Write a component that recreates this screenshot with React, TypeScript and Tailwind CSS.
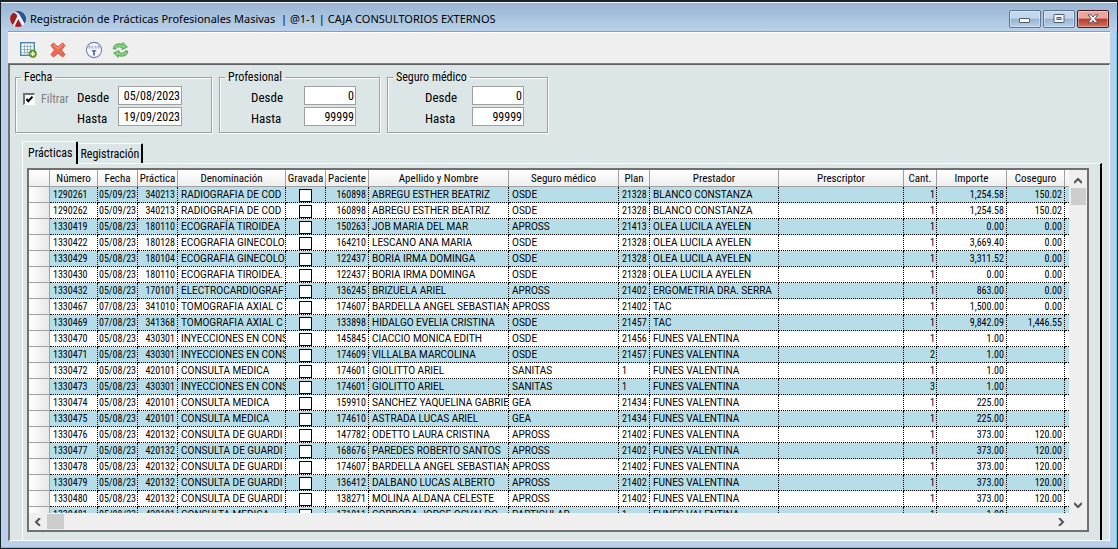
import type { ReactNode } from "react";

type Row = {
  numero: string;
  fecha: string;
  practica: string;
  denominacion: string;
  paciente: string;
  nombre: string;
  seguro: string;
  plan: string;
  prestador: string;
  cant: string;
  importe: string;
  coseguro: string;
};

const columns = [
  { label: "", width: "w-[21px]" },
  { label: "Número", width: "w-[48px]" },
  { label: "Fecha", width: "w-[40px]" },
  { label: "Práctica", width: "w-[40px]" },
  { label: "Denominación", width: "w-[108px]" },
  { label: "Gravada", width: "w-[40px]" },
  { label: "Paciente", width: "w-[43px]" },
  { label: "Apellido y Nombre", width: "w-[140px]" },
  { label: "Seguro médico", width: "w-[110px]" },
  { label: "Plan", width: "w-[31px]" },
  { label: "Prestador", width: "w-[129px]" },
  { label: "Prescriptor", width: "w-[125px]" },
  { label: "Cant.", width: "w-[33px]" },
  { label: "Importe", width: "w-[70px]" },
  { label: "Coseguro", width: "w-[58px]" }
];

const data = `1290261|05/09/23|340213|RADIOGRAFIA DE COD|160898|ABREGU ESTHER BEATRIZ|OSDE|21328|BLANCO CONSTANZA|1|1,254.58|150.02
1290262|05/09/23|340213|RADIOGRAFIA DE COD|160898|ABREGU ESTHER BEATRIZ|OSDE|21328|BLANCO CONSTANZA|1|1,254.58|150.02
1330419|05/08/23|180110|ECOGRAFÍA TIROIDEA|150263|JOB MARIA DEL MAR|APROSS|21413|OLEA LUCILA AYELEN|1|0.00|0.00
1330422|05/08/23|180128|ECOGRAFIA GINECOLO|164210|LESCANO ANA MARIA|OSDE|21328|OLEA LUCILA AYELEN|1|3,669.40|0.00
1330429|05/08/23|180104|ECOGRAFIA GINECOLO|122437|BORIA IRMA DOMINGA|OSDE|21328|OLEA LUCILA AYELEN|1|3,311.52|0.00
1330430|05/08/23|180110|ECOGRAFIA TIROIDEA.|122437|BORIA IRMA DOMINGA|OSDE|21328|OLEA LUCILA AYELEN|1|0.00|0.00
1330432|05/08/23|170101|ELECTROCARDIOGRAF|136245|BRIZUELA ARIEL|APROSS|21402|ERGOMETRIA DRA. SERRA|1|863.00|0.00
1330467|07/08/23|341010|TOMOGRAFIA AXIAL C|174607|BARDELLA ANGEL SEBASTIAN|APROSS|21402|TAC|1|1,500.00|0.00
1330469|07/08/23|341368|TOMOGRAFIA AXIAL C|133898|HIDALGO EVELIA CRISTINA|OSDE|21457|TAC|1|9,842.09|1,446.55
1330470|05/08/23|430301|INYECCIONES EN CONS|145845|CIACCIO MONICA EDITH|OSDE|21456|FUNES VALENTINA|1|1.00|
1330471|05/08/23|430301|INYECCIONES EN CONS|174609|VILLALBA MARCOLINA|OSDE|21457|FUNES VALENTINA|2|1.00|
1330472|05/08/23|420101|CONSULTA MEDICA|174601|GIOLITTO ARIEL|SANITAS|1|FUNES VALENTINA|1|1.00|
1330473|05/08/23|430301|INYECCIONES EN CONS|174601|GIOLITTO ARIEL|SANITAS|1|FUNES VALENTINA|3|1.00|
1330474|05/08/23|420101|CONSULTA MEDICA|159910|SANCHEZ YAQUELINA GABRIE|GEA|21434|FUNES VALENTINA|1|225.00|
1330475|05/08/23|420101|CONSULTA MEDICA|174610|ASTRADA LUCAS ARIEL|GEA|21434|FUNES VALENTINA|1|225.00|
1330476|05/08/23|420132|CONSULTA DE GUARDI|147782|ODETTO LAURA CRISTINA|APROSS|21402|FUNES VALENTINA|1|373.00|120.00
1330477|05/08/23|420132|CONSULTA DE GUARDI|168676|PAREDES ROBERTO SANTOS|APROSS|21402|FUNES VALENTINA|1|373.00|120.00
1330478|05/08/23|420132|CONSULTA DE GUARDI|174607|BARDELLA ANGEL SEBASTIAN|APROSS|21402|FUNES VALENTINA|1|373.00|120.00
1330479|05/08/23|420132|CONSULTA DE GUARDI|136412|DALBANO LUCAS ALBERTO|APROSS|21402|FUNES VALENTINA|1|373.00|120.00
1330480|05/08/23|420132|CONSULTA DE GUARDI|138271|MOLINA ALDANA CELESTE|APROSS|21402|FUNES VALENTINA|1|373.00|120.00
1330481|05/08/23|420101|CONSULTA MEDICA|171011|CORDOBA JORGE OSVALDO|PARTICULAR|1|FUNES VALENTINA|1|1.00|`;

const rows: Row[] = data.split("\n").map((line) => {
  const [numero, fecha, practica, denominacion, paciente, nombre, seguro, plan, prestador, cant, importe, coseguro] =
    line.split("|");
  return { numero, fecha, practica, denominacion, paciente, nombre, seguro, plan, prestador, cant, importe, coseguro };
});

function Logo() {
  return (
    <svg viewBox="0 0 16 16" className="size-4 shrink-0">
      <circle cx="8" cy="8" r="8" fill="#f4f4f8" />
      <path d="M4.6.8A8 8 0 0 1 14.6 12.6L9.4 3.4Q7.6.9 4.6.8Z" fill="#2b5597" />
      <path d="M3 1.8Q6.4 2 7.4 5L3 14.2A8 8 0 0 1 3 1.8Z" fill="#a01d22" />
      <path d="M8.3 8 12 14.9A8 8 0 0 1 4.7 15.2Z" fill="#a01d22" />
    </svg>
  );
}

function GridAddIcon() {
  return (
    <svg viewBox="0 0 17 16" className="h-4 w-[17px]">
      <rect x=".75" y=".75" width="13.5" height="12.5" fill="#fff" stroke="#4a82a8" strokeWidth="1.4" />
      <path d="M2.5 4.5h10M2.5 7.5h10M2.5 10.5h10M4.5 2.5v9.5M7.5 2.5v9.5M10.5 2.5v9.5" stroke="#8fb4cd" />
      <circle cx="12.8" cy="11.8" r="3.7" fill="#6da31c" stroke="#4d7f12" strokeWidth=".7" />
      <path d="M12.8 9.6v4.4M10.6 11.8H15" stroke="#fff" strokeWidth="1.3" />
    </svg>
  );
}

function DeleteIcon() {
  return (
    <svg viewBox="0 0 16 16" className="size-4">
      <path
        d="M3.4 1 8 5 12.6 1 15 3.4 11.4 8l3.6 4.6-2.4 2.4L8 11l-4.6 4L1 12.6 4.6 8 1 3.4Z"
        fill="#ee6a58"
        stroke="#d8503f"
        strokeLinejoin="round"
      />
      <path d="M3.5 2.8 8 6.5l4.5-3.7" fill="none" stroke="#f8a79b" />
    </svg>
  );
}

function FilterIcon() {
  return (
    <svg viewBox="0 0 18 18" className="size-[18px]">
      <circle cx="9" cy="9" r="7.6" fill="#f4f6fb" stroke="#7386b4" strokeWidth="1.1" />
      <path d="M3.4 5.4h2M6.3 5.4h1.6M10 5.4h1.2M12.3 5.4h2.2M3.4 6.9h2.2M6.4 6.9h2M9.6 6.9h2M12.4 6.9h2.2" stroke="#8793b5" strokeWidth=".9" />
      <path d="M6.4 9.2h5.2L9.7 11v3.4H8.3V11Z" fill="#33508f" />
    </svg>
  );
}

function RefreshIcon() {
  return (
    <svg viewBox="0 0 17 16" className="h-4 w-[17px]" fill="#86d27e" stroke="#3f9444" strokeWidth=".8" strokeLinejoin="round">
      <path d="M1.2 7C1.4 3.4 4 1.8 7 1.8q2.2 0 3.8.8V.6L15.4 5l-5.4 2.4V5.6Q7.6 4.4 5.6 5 4.2 5.4 4 7Z" />
      <path d="M15.8 9c-.2 3.6-2.8 5.2-5.8 5.2q-2.2 0-3.8-.8v2L1.6 11 7 8.6v1.8q2.4 1.2 4.4.6 1.4-.4 1.6-2Z" />
    </svg>
  );
}

function Chevron({ d }: { d: string }) {
  return (
    <svg viewBox="0 0 8 8" className="size-2" fill="none" stroke="#555" strokeWidth="2">
      <path d={d} />
    </svg>
  );
}

function WindowButton({ label, close, children }: { label: string; close?: boolean; children: ReactNode }) {
  const look = close
    ? "border-[#4b1820] bg-linear-to-b from-[#e6a79f] from-45% via-[#b9392a] via-50% to-[#d2705c]"
    : "border-[#5f7690] bg-linear-to-b from-[#c3d6ec] from-45% via-[#98b3d1] via-50% to-[#b5cfe9]";
  return (
    <button
      type="button"
      aria-label={label}
      className={`flex h-[18px] w-8 items-center justify-center rounded-[2px] border shadow-[inset_0_0_0_1px_#ffffff60] ${look}`}
    >
      {children}
    </button>
  );
}

function Group({ title, width, children }: { title: string; width: string; children: ReactNode }) {
  return (
    <fieldset className={`h-[63px] ${width} border border-[#a0a0a0] px-1 shadow-[1px_1px_0_#fff,inset_1px_1px_0_#fff]`}>
      <legend className="ml-px px-[3px] text-[12px] leading-[14px]">{title}</legend>
      {children}
    </fieldset>
  );
}

function RangeField({ id, label, value, width, gap }: { id: string; label: string; value: string; width: string; gap: string }) {
  return (
    <div className={`flex items-center ${gap}`}>
      <label htmlFor={id} className="w-8 pt-[5px] text-[13px] leading-[14px]">
        {label}
      </label>
      <input
        id={id}
        defaultValue={value}
        className={`h-[19px] ${width} border border-[#a0a0a0] bg-white px-px text-right text-[12px] leading-4 outline-none`}
      />
    </div>
  );
}

function RangeGroup({ title, name, indent, gap }: { title: string; name: string; indent: string; gap: string }) {
  return (
    <Group title={title} width="w-[161px]">
      <div className={`flex flex-col gap-[2px] pt-[2px] ${indent}`}>
        <RangeField id={`${name}-desde`} label="Desde" value="0" width="w-[52px]" gap={gap} />
        <RangeField id={`${name}-hasta`} label="Hasta" value="99999" width="w-[52px]" gap={gap} />
      </div>
    </Group>
  );
}

function Cell({ children, right, tight, text }: { children?: ReactNode; right?: boolean; tight?: boolean; text?: boolean }) {
  return (
    <td
      className={`h-4 overflow-hidden border-r border-b border-dotted border-black whitespace-nowrap ${right ? "text-right" : ""} ${tight ? "px-px" : "pr-[2px] pl-[3px]"} ${text ? "font-['Roboto',sans-serif]" : ""}`}
    >
      {children}
    </td>
  );
}

function PracticesTable() {
  return (
    <table className="w-full table-fixed border-separate border-spacing-0 text-[10px] leading-[15px] text-black">
      <thead className="text-[11px]">
        <tr className="bg-linear-to-b from-white to-[#ededed]">
          {columns.map((col) => (
            <th
              key={col.label}
              className={`h-[17px] overflow-hidden border-r border-b border-[#a0a0a0] p-0 text-center font-normal whitespace-nowrap ${col.width}`}
            >
              {col.label}
            </th>
          ))}
          <th className="border-b border-[#a0a0a0] p-0" />
        </tr>
      </thead>
      <tbody>
        {rows.map((row) => (
          <tr key={row.numero} className="odd:bg-[#b7dde8] even:bg-white">
            <td className="h-4 border-r border-b border-[#a0a0a0] bg-linear-to-r from-white to-[#e8e8e8] p-0" />
            <Cell>{row.numero}</Cell>
            <Cell tight>{row.fecha}</Cell>
            <Cell right>{row.practica}</Cell>
            <Cell text>{row.denominacion}</Cell>
            <Cell tight>
              <input
                type="checkbox"
                aria-label={`Gravada ${row.numero}`}
                className="mx-auto mt-[2px] block size-[13px] appearance-none border border-black bg-white"
              />
            </Cell>
            <Cell right>{row.paciente}</Cell>
            <Cell text>{row.nombre}</Cell>
            <Cell text>{row.seguro}</Cell>
            <Cell>{row.plan}</Cell>
            <Cell text>{row.prestador}</Cell>
            <Cell />
            <Cell right tight>{row.cant}</Cell>
            <Cell right>{row.importe}</Cell>
            <Cell right>{row.coseguro}</Cell>
            <td className="border-b border-dotted border-black p-0" />
          </tr>
        ))}
      </tbody>
    </table>
  );
}

export default function App() {
  return (
    <div className="flex h-screen flex-col overflow-hidden border-x border-b border-t-2 border-[#182028] bg-[#b9d1ea] font-['Roboto_Condensed','Roboto',sans-serif] text-black shadow-[inset_-1px_-1px_0_#58cdee]">
      <header className="flex h-[29px] shrink-0 items-center justify-between bg-linear-to-b from-[#98b4d2] to-[#b9d1ea] pt-[5px] pr-2 pl-[9px] shadow-[inset_0_1px_0_#eef6ff]">
        <div className="flex items-center gap-1">
          <Logo />
          <h1 className="font-['Noto_Sans',sans-serif] text-[11px] leading-4 whitespace-pre">
            Registración de Prácticas Profesionales Masivas  | @1-1 | CAJA CONSULTORIOS EXTERNOS
          </h1>
        </div>
        <div className="flex gap-[2px]">
          <WindowButton label="Minimizar">
            <svg viewBox="0 0 12 8" className="h-2 w-3">
              <rect x=".5" y="3.5" width="10" height="4" rx=".5" fill="#fff" stroke="#4c5a6c" />
            </svg>
          </WindowButton>
          <WindowButton label="Maximizar">
            <svg viewBox="0 0 12 10" className="h-[10px] w-3">
              <rect x="1" y=".5" width="10" height="8" rx=".5" fill="#fff" stroke="#4c5a6c" />
              <rect x="4" y="3.5" width="4" height="2" fill="#a8c0dc" stroke="#4c5a6c" />
            </svg>
          </WindowButton>
          <WindowButton label="Cerrar" close>
            <svg viewBox="0 0 12 10" className="h-[10px] w-3">
              <path d="M1 .8h3L6 3 8 .8h3L7.8 4.7 11 8.8H8L6 6.5 4 8.8H1l3.2-4.1Z" fill="#fff" stroke="#4c4654" strokeWidth=".9" />
            </svg>
          </WindowButton>
        </div>
      </header>

      <div className="mx-[7px] mb-[7px] flex min-h-0 flex-1 flex-col border-t border-[#8c9db0]">
        <div className="flex h-8 shrink-0 items-center border-t border-b border-t-white border-b-[#808080] bg-[#efefef] pt-1 pl-3">
          <button type="button" aria-label="Agregar">
            <GridAddIcon />
          </button>
          <button type="button" aria-label="Eliminar" className="ml-[13px]">
            <DeleteIcon />
          </button>
          <button type="button" aria-label="Filtrar por rango" className="ml-[19px]">
            <FilterIcon />
          </button>
          <button type="button" aria-label="Actualizar" className="ml-[9px]">
            <RefreshIcon />
          </button>
        </div>

        <main className="flex min-h-0 flex-1 flex-col border-t border-r border-b border-l-2 border-t-[#606060] border-r-white border-b-white border-l-[#707070] bg-[#dde6e7] pt-[5px]">
          <form className="flex shrink-0 gap-[7px] pl-[5px]">
            <Group title="Fecha" width="w-[197px]">
              <div className="flex pl-[3px]">
                <label className="flex w-[54px] items-center gap-[6px] pb-3 text-[12px] leading-4 text-[#808080]">
                  <span className="relative flex">
                    <input
                      type="checkbox"
                      defaultChecked
                      className="size-3 appearance-none border-t-2 border-r border-b border-l-2 border-t-[#707070] border-r-white border-b-white border-l-[#707070] bg-white"
                    />
                    <svg viewBox="0 0 12 12" className="pointer-events-none absolute inset-0 size-3">
                      <path d="M3.5 6 5.3 8.2 9.5 3.6" fill="none" stroke="#000" strokeWidth="2" />
                    </svg>
                  </span>
                  Filtrar
                </label>
                <div className="flex flex-col gap-[2px] pt-[2px]">
                  <RangeField id="fecha-desde" label="Desde" value="05/08/2023" width="w-[64px]" gap="gap-[9px]" />
                  <RangeField id="fecha-hasta" label="Hasta" value="19/09/2023" width="w-[64px]" gap="gap-[9px]" />
                </div>
              </div>
            </Group>
            <RangeGroup title="Profesional" name="profesional" indent="pl-[27px]" gap="gap-[21px]" />
            <RangeGroup title="Seguro médico" name="seguro" indent="pl-[33px]" gap="gap-[15px]" />
          </form>

          <div role="tablist" className="mt-2 flex h-[22px] shrink-0 items-end pl-3 text-[12px] leading-4">
            <button
              type="button"
              role="tab"
              aria-selected="true"
              className="z-10 -mb-px h-[23px] rounded-t-[2px] border-t border-r-2 border-l border-t-white border-r-black border-l-white bg-[#dde6e7] pr-1 pb-px pl-[5px]"
            >
              Prácticas
            </button>
            <button
              type="button"
              role="tab"
              aria-selected="false"
              className="h-5 rounded-t-[2px] border-t border-r-2 border-t-white border-r-black px-[2px]"
            >
              Registración
            </button>
          </div>

          <section className="mr-[7px] ml-3 flex min-h-0 flex-1 flex-col border-t border-r-2 border-l border-t-white border-r-black border-l-white pt-1 pr-[11px] pb-2 pl-1">
            <div className="flex min-h-0 flex-1 flex-col border-2 border-[#707070] bg-[#efefef]">
              <div className="flex min-h-0 flex-1">
                <div className="min-w-0 flex-1 overflow-hidden bg-white">
                  <PracticesTable />
                </div>
                <div className="flex w-[18px] shrink-0 flex-col items-center pt-1 pb-px">
                  <button type="button" aria-label="Subir" className="flex h-[14px] items-center">
                    <Chevron d="M0 6 4 2l4 4" />
                  </button>
                  <div className="h-[17px] w-[15px] bg-[#cdcdcd]" />
                  <button type="button" aria-label="Bajar" className="mt-auto flex h-[14px] items-center">
                    <Chevron d="M0 2l4 4 4-4" />
                  </button>
                </div>
              </div>
              <div className="flex h-[17px] shrink-0 items-center pr-[22px] pl-[5px]">
                <button type="button" aria-label="Izquierda" className="flex w-[13px] items-center">
                  <Chevron d="M6 0 2 4l4 4" />
                </button>
                <div className="h-[15px] w-[17px] bg-[#cdcdcd]" />
                <button type="button" aria-label="Derecha" className="ml-auto flex items-center">
                  <Chevron d="M2 0l4 4-4 4" />
                </button>
              </div>
            </div>
          </section>
        </main>
      </div>
    </div>
  );
}
